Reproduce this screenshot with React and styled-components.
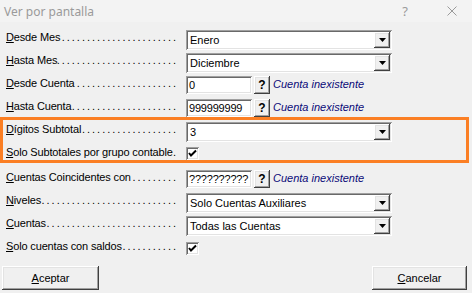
import React from 'react';
import styled, { createGlobalStyle } from 'styled-components';

const GlobalStyle = createGlobalStyle`
  html, body {
    margin: 0;
    padding: 0;
    background: #f0f0f0;
  }
  body {
    font-family: "Liberation Sans", Arial, sans-serif;
    font-size: 11px;
    color: #000;
  }
`;

const raised = `
  box-shadow: inset -1px -1px #404040, inset 1px 1px #ffffff,
    inset -2px -2px #a0a0a0, inset 2px 2px #e3e3e3;
`;

const sunken = `
  box-shadow: inset 1px 1px #a0a0a0, inset -1px -1px #ffffff,
    inset 2px 2px #696969, inset -2px -2px #e3e3e3;
`;

const Window = styled.div`
  width: 472px;
  height: 293px;
  display: flex;
  flex-direction: column;
  background: #f0f0f0;
  overflow: hidden;
`;

const TitleBar = styled.div`
  flex: 0 0 22px;
  display: flex;
  align-items: center;
  background: #f3f3f3;
`;

const Title = styled.div`
  flex: 1;
  padding-left: 4px;
  font-family: "Noto Sans", "Open Sans", sans-serif;
  font-size: 12px;
  color: #9a9a9a;
`;

const TitleButton = styled.div`
  width: ${p => p.$w}px;
  height: 22px;
  display: flex;
  align-items: center;
  justify-content: center;
  color: #9a9a9a;
  font-family: "Noto Sans", sans-serif;
  font-size: 13px;
`;

const Form = styled.div`
  display: flex;
  flex-direction: column;
  padding: 8px 0 0 6px;
`;

const Row = styled.div`
  display: flex;
  align-items: flex-start;
  height: ${p => p.$h || 23}px;
`;

const Group = styled.div`
  position: relative;
  display: flex;
  flex-direction: column;
`;

const Highlight = styled.div`
  position: absolute;
  left: -6px;
  top: -5px;
  right: 3px;
  bottom: 7px;
  border: 3px solid #fb7f24;
  pointer-events: none;
`;

const Label = styled.div`
  width: 172px;
  margin-right: 8px;
  display: flex;
  padding-top: 1px;
  line-height: 13px;
  white-space: nowrap;
  overflow: hidden;
  letter-spacing: -0.15px;
`;

const LabelText = styled.span`
  flex: none;
`;

const Leader = styled.span`
  flex: 1;
  overflow: hidden;
  direction: rtl;
  letter-spacing: 2px;
  padding-left: 3px;
`;

const Combo = styled.div`
  width: 206px;
  height: 20px;
  box-sizing: border-box;
  padding: 2px;
  display: flex;
  align-items: center;
  background: #fff;
  ${sunken}
`;

const ComboText = styled.div`
  flex: 1;
  padding-left: 2px;
  line-height: 16px;
`;

const DropButton = styled.div`
  width: 16px;
  height: 16px;
  display: flex;
  align-items: center;
  justify-content: center;
  background: #f0f0f0;
  ${raised}
`;

const Field = styled.div`
  width: 66px;
  height: 18px;
  box-sizing: border-box;
  padding-left: 3px;
  display: flex;
  align-items: center;
  background: #fff;
  white-space: nowrap;
  overflow: hidden;
  letter-spacing: -0.2px;
  ${sunken}
`;

const HelpButton = styled.div`
  width: 16px;
  height: 18px;
  margin-left: 2px;
  display: flex;
  align-items: center;
  justify-content: center;
  background: #f0f0f0;
  font-weight: bold;
  font-size: 12px;
  ${raised}
`;

const Status = styled.div`
  margin-left: 3px;
  padding-top: 2px;
  font-style: italic;
  font-size: 11px;
  color: #0a0a78;
`;

const Check = styled.div`
  width: 13px;
  height: 13px;
  box-sizing: border-box;
  margin-top: ${p => p.$top || 2}px;
  display: flex;
  align-items: center;
  justify-content: center;
  background: #fff;
  ${sunken}
`;

const Footer = styled.div`
  display: flex;
  justify-content: space-between;
  padding: 4px 5px 0 2px;
`;

const PushButton = styled.div`
  width: ${p => p.$w || 97}px;
  height: 24px;
  display: flex;
  align-items: center;
  justify-content: center;
  background: #f0f0f0;
  ${raised}
`;

const Arrow = () => (
  <svg width="7" height="4" viewBox="0 0 7 4">
    <polygon points="0,0 7,0 3.5,4" fill="#000" />
  </svg>
);

const Tick = () => (
  <svg width="9" height="9" viewBox="0 0 9 9">
    <polyline points="1,4 3,6.5 8,1.5" fill="none" stroke="#000" strokeWidth="2" />
  </svg>
);

const Close = () => (
  <svg width="10" height="10" viewBox="0 0 10 10">
    <path d="M0.5 0.5 L9.5 9.5 M9.5 0.5 L0.5 9.5" stroke="#9a9a9a" strokeWidth="1" />
  </svg>
);

const dots = '.'.repeat(60);

const FieldLabel = ({ k, rest }) => (
  <Label>
    <LabelText><u>{k}</u>{rest}</LabelText>
    <Leader>{dots}</Leader>
  </Label>
);

const ComboBox = ({ value }) => (
  <Combo>
    <ComboText>{value}</ComboText>
    <DropButton><Arrow /></DropButton>
  </Combo>
);

const AccountField = ({ value }) => (
  <>
    <Field>{value}</Field>
    <HelpButton>?</HelpButton>
    <Status>Cuenta inexistente</Status>
  </>
);

export default function App() {
  return (
    <Window>
      <GlobalStyle />
      <TitleBar>
        <Title>Ver por pantalla</Title>
        <TitleButton $w={54}>?</TitleButton>
        <TitleButton $w={40}><Close /></TitleButton>
      </TitleBar>
      <Form>
        <Row>
          <FieldLabel k="D" rest="esde Mes" />
          <ComboBox value="Enero" />
        </Row>
        <Row>
          <FieldLabel k="H" rest="asta Mes" />
          <ComboBox value="Diciembre" />
        </Row>
        <Row>
          <FieldLabel k="D" rest="esde Cuenta" />
          <AccountField value="0" />
        </Row>
        <Row>
          <FieldLabel k="H" rest="asta Cuenta" />
          <AccountField value="999999999" />
        </Row>
        <Group>
          <Highlight />
          <Row>
            <FieldLabel k="D" rest="ígitos Subtotal" />
            <ComboBox value="3" />
          </Row>
          <Row $h={25}>
            <FieldLabel k="S" rest="olo Subtotales por grupo contable" />
            <Check><Tick /></Check>
          </Row>
        </Group>
        <Row>
          <FieldLabel k="C" rest="uentas Coincidentes con" />
          <AccountField value="??????????" />
        </Row>
        <Row>
          <FieldLabel k="N" rest="iveles" />
          <ComboBox value="Solo Cuentas Auxiliares" />
        </Row>
        <Row>
          <FieldLabel k="C" rest="uentas" />
          <ComboBox value="Todas las Cuentas" />
        </Row>
        <Row>
          <FieldLabel k="S" rest="olo cuentas con saldos" />
          <Check $top={3}><Tick /></Check>
        </Row>
      </Form>
      <Footer>
        <PushButton><span><u>A</u>ceptar</span></PushButton>
        <PushButton $w={95}><span><u>C</u>ancelar</span></PushButton>
      </Footer>
    </Window>
  );
}
